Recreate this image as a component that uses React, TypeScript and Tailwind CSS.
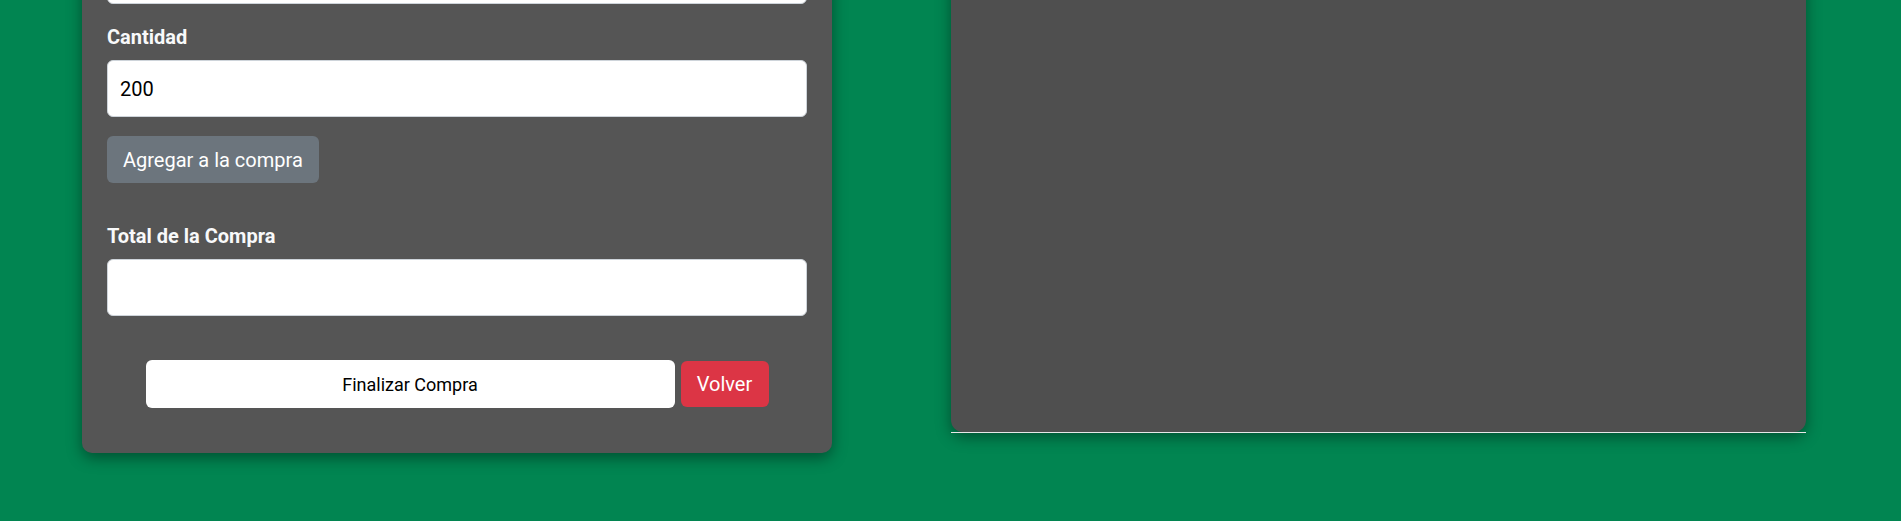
import React, { useState } from 'react';

const fieldClass =
  'w-full h-[57px] rounded-[6px] border border-[#ced4da] bg-white px-3 text-[20px] leading-[30px] text-black outline-none';

const CompraForm = () => {
  const [producto, setProducto] = useState('');
  const [cantidad, setCantidad] = useState('200');
  const [total, setTotal] = useState('');

  return (
    <div className="w-[750px] shrink-0 rounded-[10px] bg-[#555555] px-[25px] pt-[25px] pb-[45px] shadow-[0_5px_15px_rgba(0,0,0,0.4)]">
      {/* producto (cut off by the scroll) */}
      <input className={fieldClass} value={producto} onChange={(e) => setProducto(e.target.value)} />

      <label className="mt-[18px] mb-[8px] block text-[20px] leading-[30px] font-bold text-[#f8f9fa]">Cantidad</label>
      <input className={fieldClass} value={cantidad} onChange={(e) => setCantidad(e.target.value)} />

      <button className="mt-[19px] h-[47px] rounded-[6px] bg-[#6c757d] px-4 text-[20px] leading-[30px] text-white">
        Agregar a la compra
      </button>

      <label className="mt-[38px] mb-[8px] block text-[20px] leading-[30px] font-bold text-[#f8f9fa]">
        Total de la Compra
      </label>
      <input className={fieldClass} value={total} onChange={(e) => setTotal(e.target.value)} />

      <div className="mt-[44px] flex items-center justify-center gap-[6px]">
        <button className="h-[48px] w-[529px] rounded-[6px] bg-white text-[18px] text-black">Finalizar Compra</button>
        <button className="h-[46px] w-[88px] rounded-[6px] bg-[#dc3545] text-[20px] text-white">Volver</button>
      </div>
    </div>
  );
};

const App = () => {
  return (
    <div className="min-h-[521px] overflow-hidden bg-[#018551] font-['Roboto',sans-serif]">
      <div className="-mt-[78px] flex items-start gap-[119px] pl-[82px]">
        <CompraForm />

        {/* detalle de la compra */}
        <div className="flex w-[855px] shrink-0 flex-col">
          <div className="h-[510px] rounded-b-[12px] bg-[#4f4f4f] shadow-[0_5px_15px_rgba(0,0,0,0.4)]"></div>
          <div className="h-px bg-[#e8e8e8]"></div>
        </div>
      </div>
    </div>
  );
};

export default App;
